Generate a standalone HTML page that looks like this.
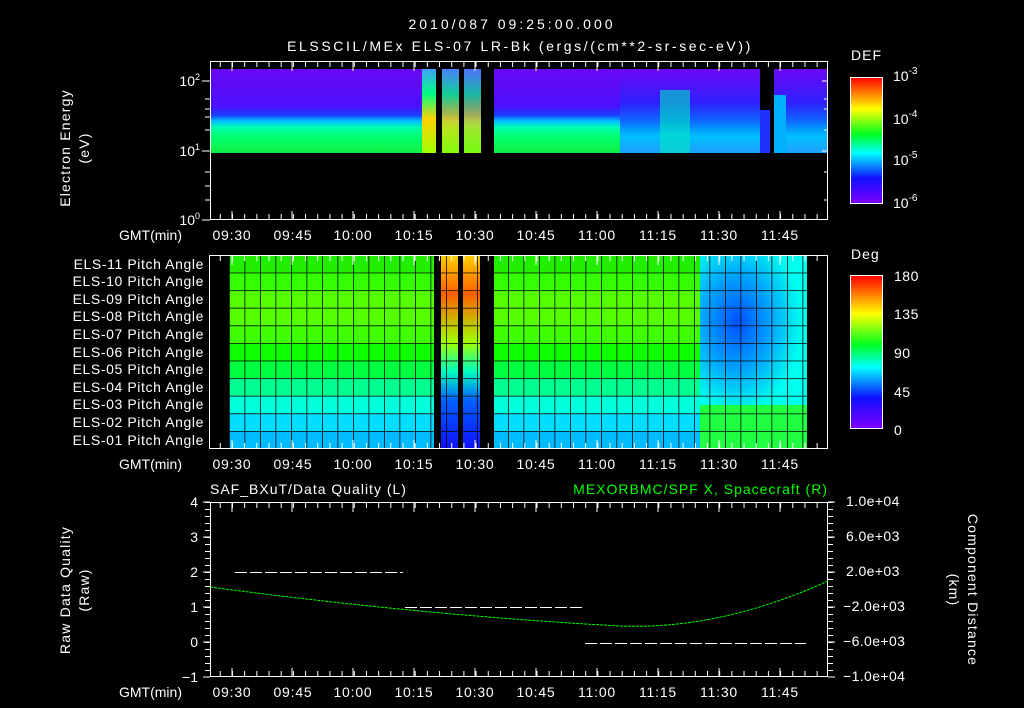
<!DOCTYPE html>
<html><head><meta charset="utf-8"><style>
html,body{margin:0;padding:0;background:#000;width:1024px;height:708px;overflow:hidden}
svg{display:block}
text{font-family:"Liberation Sans",sans-serif;fill:#fff;font-size:14px}
</style></head><body>
<svg width="1024" height="708" viewBox="0 0 1024 708" xmlns="http://www.w3.org/2000/svg">
<defs>
<linearGradient id="rb" x1="0" y1="1" x2="0" y2="0">
<stop offset="0" stop-color="#7f00ff"/><stop offset="0.2" stop-color="#1010ff"/><stop offset="0.4" stop-color="#00ffff"/><stop offset="0.55" stop-color="#00ff20"/><stop offset="0.75" stop-color="#ffff00"/><stop offset="1" stop-color="#ff0000"/>
</linearGradient>
<linearGradient id="spec" x1="0" y1="0" x2="0" y2="1">
<stop offset="0" stop-color="#6a08f0"/><stop offset="0.45" stop-color="#4a10ff"/><stop offset="0.55" stop-color="#1840ff"/><stop offset="0.62" stop-color="#00c0ff"/><stop offset="0.7" stop-color="#00ffb0"/><stop offset="0.8" stop-color="#00ff70"/><stop offset="1" stop-color="#10f040"/>
</linearGradient>
<linearGradient id="spec2" x1="0" y1="0" x2="0" y2="1">
<stop offset="0" stop-color="#6a08f0"/><stop offset="0.4" stop-color="#3020ff"/><stop offset="0.6" stop-color="#1060ff"/><stop offset="0.8" stop-color="#00c0ff"/><stop offset="1" stop-color="#20a0ff"/>
</linearGradient>
<linearGradient id="specy" x1="0" y1="0" x2="0" y2="1">
<stop offset="0" stop-color="#40a0ff"/><stop offset="0.3" stop-color="#00ff80"/><stop offset="0.6" stop-color="#ffd000"/><stop offset="1" stop-color="#a0ff00"/>
</linearGradient>
<linearGradient id="pa" x1="0" y1="0" x2="0" y2="1">
<stop offset="0" stop-color="#ffd000"/><stop offset="0.2" stop-color="#ff6000"/><stop offset="0.45" stop-color="#a0ff00"/><stop offset="0.6" stop-color="#00ffc0"/><stop offset="0.75" stop-color="#0060ff"/><stop offset="1" stop-color="#1010ff"/>
</linearGradient>
<radialGradient id="blob" cx="0.35" cy="0.45" r="0.6">
<stop offset="0" stop-color="#0050ff"/><stop offset="0.5" stop-color="#00a0ff"/><stop offset="1" stop-color="#00ffee"/>
</radialGradient>
<pattern id="grid" x="229" y="255" width="15.5" height="17.6" patternUnits="userSpaceOnUse">
<path d="M0 0H15.5M0 0V17.6" stroke="#000" stroke-width="1.5" fill="none"/>
</pattern>
</defs>

<text x="512" y="29" text-anchor="middle" font-size="16" letter-spacing="3">2010/087 09:25:00.000</text>
<text x="520" y="51" text-anchor="middle" font-size="16" letter-spacing="2.6">ELSSCIL/MEx ELS-07 LR-Bk  (ergs/(cm**2-sr-sec-eV))</text>

<!-- Panel 1 -->
<rect x="210" y="69" width="618" height="84" fill="url(#spec)"/>
<rect x="620" y="69" width="208" height="84" fill="url(#spec2)"/>
<rect x="660" y="90" width="30" height="63" fill="#00e8c0" opacity="0.6"/>
<rect x="422" y="69" width="14" height="84" fill="url(#specy)"/>
<rect x="442" y="69" width="17" height="84" fill="url(#specy)" opacity="0.8"/>
<rect x="464" y="69" width="17" height="84" fill="url(#specy)" opacity="0.7"/>
<rect x="436" y="69" width="6" height="84" fill="#000"/>
<rect x="459" y="69" width="5" height="84" fill="#000"/>
<rect x="481" y="69" width="13" height="84" fill="#000"/>
<rect x="760" y="69" width="14" height="84" fill="#000"/>
<rect x="760" y="110" width="10" height="43" fill="#2030ff"/>
<rect x="774" y="95" width="12" height="58" fill="#00b0ff"/>
<rect x="210" y="153" width="618" height="67" fill="#000"/>
<rect x="210.5" y="61.5" width="617" height="158" fill="none" stroke="#fff"/>
<text x="200" y="86" text-anchor="end" font-size="13">10<tspan dy="-6" font-size="9">2</tspan></text>
<text x="200" y="156" text-anchor="end" font-size="13">10<tspan dy="-6" font-size="9">1</tspan></text>
<text x="200" y="225" text-anchor="end" font-size="13">10<tspan dy="-6" font-size="9">0</tspan></text>
<path d="M202 81H210M202 151H210M202 220H210M205 99H210M205 109H210M205 117H210M205 130H210M205 172H210M205 186H210M205 200H210M828 81h-6M828 151h-6M824 99h4M824 109h4M824 130h4M824 172h4M824 200h4" stroke="#fff"/>
<text transform="translate(70,148) rotate(-90)" text-anchor="middle" font-size="15" letter-spacing="1.2">Electron Energy</text>
<text transform="translate(89,148) rotate(-90)" text-anchor="middle" font-size="15" letter-spacing="1.2">(eV)</text>
<g stroke="#fff">
<path d="M232 62v9M292 62v9M353 62v9M414 62v9M475 62v9M536 62v9M597 62v9M658 62v9M719 62v9M780 62v9M232 220v-9M292 220v-9M353 220v-9M414 220v-9M475 220v-9M536 220v-9M597 220v-9M658 220v-9M719 220v-9M780 220v-9"/>
<line x1="219.8" y1="64.5" x2="828" y2="64.5" stroke-width="5" stroke-dasharray="1 11.18"/>
<line x1="219.8" y1="216.5" x2="828" y2="216.5" stroke-width="5" stroke-dasharray="1 11.18"/>
</g>
<g font-size="13" letter-spacing="0.8">
<text x="182" y="240" text-anchor="end" letter-spacing="0">GMT(min)</text>
<text x="232" y="240" text-anchor="middle">09:30</text><text x="293" y="240" text-anchor="middle">09:45</text><text x="353" y="240" text-anchor="middle">10:00</text><text x="414" y="240" text-anchor="middle">10:15</text><text x="475" y="240" text-anchor="middle">10:30</text><text x="536" y="240" text-anchor="middle">10:45</text><text x="597" y="240" text-anchor="middle">11:00</text><text x="658" y="240" text-anchor="middle">11:15</text><text x="719" y="240" text-anchor="middle">11:30</text><text x="780" y="240" text-anchor="middle">11:45</text>
</g>
<!-- colorbar 1 -->
<text x="851" y="60" font-size="16" letter-spacing="1">DEF</text>
<rect x="850.5" y="77.5" width="32" height="126" fill="url(#rb)" stroke="#fff"/>
<g font-size="15"><text x="893" y="81">10<tspan dy="-7" font-size="10">-3</tspan></text><text x="893" y="124">10<tspan dy="-7" font-size="10">-4</tspan></text><text x="893" y="165">10<tspan dy="-7" font-size="10">-5</tspan></text><text x="893" y="208">10<tspan dy="-7" font-size="10">-6</tspan></text></g>

<!-- Panel 2 -->
<rect x="209" y="255" width="619" height="194" fill="#000"/>
<rect x="229" y="255" width="578" height="17.6" fill="#22ee00"/>
<rect x="229" y="272.6" width="578" height="17.6" fill="#33ff00"/>
<rect x="229" y="290.2" width="578" height="17.6" fill="#55ff00"/>
<rect x="229" y="307.8" width="578" height="17.6" fill="#55ff00"/>
<rect x="229" y="325.4" width="578" height="17.6" fill="#40ff00"/>
<rect x="229" y="343" width="578" height="17.6" fill="#10ff00"/>
<rect x="229" y="360.6" width="578" height="17.6" fill="#00ff40"/>
<rect x="229" y="378.2" width="578" height="17.6" fill="#00ff90"/>
<rect x="229" y="395.8" width="578" height="17.6" fill="#00ffdd"/>
<rect x="229" y="413.4" width="578" height="17.6" fill="#00ddff"/>
<rect x="229" y="431" width="578" height="18" fill="#00bbff"/>
<rect x="700" y="255" width="107" height="150" fill="url(#blob)"/>
<rect x="700" y="405" width="107" height="44" fill="#20ff40"/>
<rect x="441" y="255" width="17" height="194" fill="url(#pa)"/>
<rect x="463" y="255" width="17" height="194" fill="url(#pa)"/>
<rect x="434" y="255" width="7" height="194" fill="#000"/>
<rect x="458" y="255" width="5" height="194" fill="#000"/>
<rect x="480" y="255" width="14" height="194" fill="#000"/>
<rect x="229" y="255" width="578" height="194" fill="url(#grid)"/>
<rect x="209.5" y="255.5" width="618" height="193" fill="none" stroke="#fff"/>
<g stroke="#fff"><path d="M232 256v9M292 256v9M353 256v9M414 256v9M475 256v9M536 256v9M597 256v9M658 256v9M719 256v9M780 256v9M232 449v-9M292 449v-9M353 449v-9M414 449v-9M475 449v-9M536 449v-9M597 449v-9M658 449v-9M719 449v-9M780 449v-9"/>
<line x1="219.8" y1="258.5" x2="828" y2="258.5" stroke-width="5" stroke-dasharray="1 11.18"/>
<line x1="219.8" y1="445.5" x2="828" y2="445.5" stroke-width="5" stroke-dasharray="1 11.18"/></g>
<g font-size="12.5" text-anchor="end" letter-spacing="0.6">
<text x="204" y="269">ELS-11 Pitch Angle</text><text x="204" y="286">ELS-10 Pitch Angle</text><text x="204" y="304">ELS-09 Pitch Angle</text><text x="204" y="321">ELS-08 Pitch Angle</text><text x="204" y="339">ELS-07 Pitch Angle</text><text x="204" y="357">ELS-06 Pitch Angle</text><text x="204" y="374">ELS-05 Pitch Angle</text><text x="204" y="392">ELS-04 Pitch Angle</text><text x="204" y="409">ELS-03 Pitch Angle</text><text x="204" y="427">ELS-02 Pitch Angle</text><text x="204" y="445">ELS-01 Pitch Angle</text>
</g>
<g font-size="13" letter-spacing="0.8">
<text x="182" y="469" text-anchor="end" letter-spacing="0">GMT(min)</text>
<text x="232" y="469" text-anchor="middle">09:30</text><text x="293" y="469" text-anchor="middle">09:45</text><text x="353" y="469" text-anchor="middle">10:00</text><text x="414" y="469" text-anchor="middle">10:15</text><text x="475" y="469" text-anchor="middle">10:30</text><text x="536" y="469" text-anchor="middle">10:45</text><text x="597" y="469" text-anchor="middle">11:00</text><text x="658" y="469" text-anchor="middle">11:15</text><text x="719" y="469" text-anchor="middle">11:30</text><text x="780" y="469" text-anchor="middle">11:45</text>
</g>
<text x="851" y="259" font-size="16" letter-spacing="1">Deg</text>
<rect x="850.5" y="275.5" width="32" height="153" fill="url(#rb)" stroke="#fff"/>
<g font-size="16" letter-spacing="0.5"><text x="894" y="281">180</text><text x="894" y="319">135</text><text x="894" y="358">90</text><text x="894" y="397">45</text><text x="894" y="435">0</text></g>

<!-- Panel 3 -->
<text x="210" y="494" font-size="15" letter-spacing="1">SAF_BXuT/Data Quality (L)</text>
<text x="828" y="494" font-size="15" text-anchor="end" letter-spacing="1" style="fill:#00ff00">MEXORBMC/SPF X, Spacecraft (R)</text>
<rect x="210.5" y="502.5" width="617" height="174" fill="none" stroke="#fff"/>
<g stroke="#fff"><path d="M232 503v9M292 503v9M353 503v9M414 503v9M475 503v9M536 503v9M597 503v9M658 503v9M719 503v9M780 503v9M232 677v-9M292 677v-9M353 677v-9M414 677v-9M475 677v-9M536 677v-9M597 677v-9M658 677v-9M719 677v-9M780 677v-9M203 502h7M203 537h7M203 572h7M203 607h7M203 642h7M203 677h7M828 502h7M828 537h7M828 572h7M828 607h7M828 642h7M828 677h7"/>
<line x1="219.8" y1="505.5" x2="828" y2="505.5" stroke-width="5" stroke-dasharray="1 11.18"/>
<line x1="219.8" y1="673.5" x2="828" y2="673.5" stroke-width="5" stroke-dasharray="1 11.18"/>
<line x1="207.5" y1="502" x2="207.5" y2="677" stroke-width="5" stroke-dasharray="1 6"/>
<line x1="830.5" y1="502" x2="830.5" y2="677" stroke-width="5" stroke-dasharray="1 6"/></g>
<path d="M235 572.5H403M405 607.5H582M585 643.5H806" stroke="#fff" stroke-dasharray="12 3" shape-rendering="crispEdges"/>
<path d="M210 587 Q420 615 620 626 Q720 630 828 581" stroke="#00ff00" fill="none" stroke-dasharray="3 1"/>
<g font-size="14" text-anchor="end"><text x="198" y="507">4</text><text x="198" y="542">3</text><text x="198" y="577">2</text><text x="198" y="612">1</text><text x="198" y="647">0</text><text x="198" y="682">−1</text></g>
<g font-size="12.5" letter-spacing="0.4"><text x="846" y="506">1.0e+04</text><text x="846" y="541">6.0e+03</text><text x="846" y="576">2.0e+03</text><text x="843" y="611">−2.0e+03</text><text x="843" y="646">−6.0e+03</text><text x="843" y="681">−1.0e+04</text></g>
<text transform="translate(70,590) rotate(-90)" text-anchor="middle" font-size="15" letter-spacing="1.2">Raw Data Quality</text>
<text transform="translate(89,590) rotate(-90)" text-anchor="middle" font-size="15" letter-spacing="1.2">(Raw)</text>
<text transform="translate(968,590) rotate(90)" text-anchor="middle" font-size="15" letter-spacing="1.2">Component Distance</text>
<text transform="translate(949,590) rotate(90)" text-anchor="middle" font-size="15" letter-spacing="1.2">(km)</text>
<g font-size="13" letter-spacing="0.8">
<text x="182" y="697" text-anchor="end" letter-spacing="0">GMT(min)</text>
<text x="232" y="697" text-anchor="middle">09:30</text><text x="293" y="697" text-anchor="middle">09:45</text><text x="353" y="697" text-anchor="middle">10:00</text><text x="414" y="697" text-anchor="middle">10:15</text><text x="475" y="697" text-anchor="middle">10:30</text><text x="536" y="697" text-anchor="middle">10:45</text><text x="597" y="697" text-anchor="middle">11:00</text><text x="658" y="697" text-anchor="middle">11:15</text><text x="719" y="697" text-anchor="middle">11:30</text><text x="780" y="697" text-anchor="middle">11:45</text>
</g>
</svg>
</body></html>
